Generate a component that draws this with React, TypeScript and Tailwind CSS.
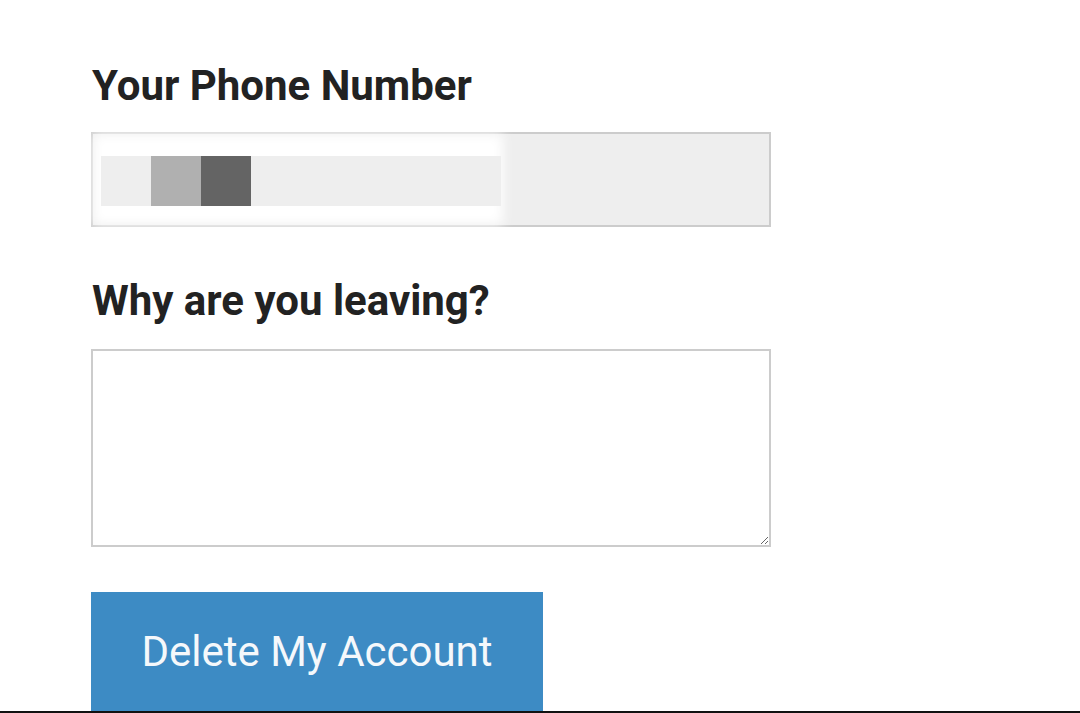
export default function App() {
  return (
    <div className="relative w-[1080px] h-[713px] bg-white overflow-hidden font-['Roboto',sans-serif] text-[#222]">
      <div className="pl-[91px] pt-[57px] flex flex-col">
        <label className="text-[42px] font-bold leading-[57px] pl-px">Your Phone Number</label>
        <div className="mt-[18px] w-[680px] h-[95px] border-2 border-[#cccccc] bg-[#eeeeee] relative">
          <div className="absolute left-0 top-0 w-[410px] h-[91px] bg-white blur-[6px]" />
          <div className="absolute left-[8px] top-[22px] w-[400px] h-[50px] bg-[#eeeeee] flex">
            <div className="w-[50px]" />
            <div className="w-[50px] h-full bg-[#b0b0b0]" />
            <div className="w-[50px] h-full bg-[#646464]" />
          </div>
        </div>
        <label className="mt-[45px] text-[42px] font-bold leading-[57px] pl-px">Why are you leaving?</label>
        <textarea className="mt-[20px] w-[680px] h-[198px] border-2 border-[#cccccc] bg-white resize outline-none" />
        <button className="mt-[45px] w-[452px] h-[122px] bg-[#3d8bc4] text-[#f5f8fb] text-[42px] font-normal pb-[4px]">
          Delete My Account
        </button>
      </div>
      <div className="absolute left-0 bottom-0 w-full h-[2px] bg-[#111]" />
    </div>
  );
}
